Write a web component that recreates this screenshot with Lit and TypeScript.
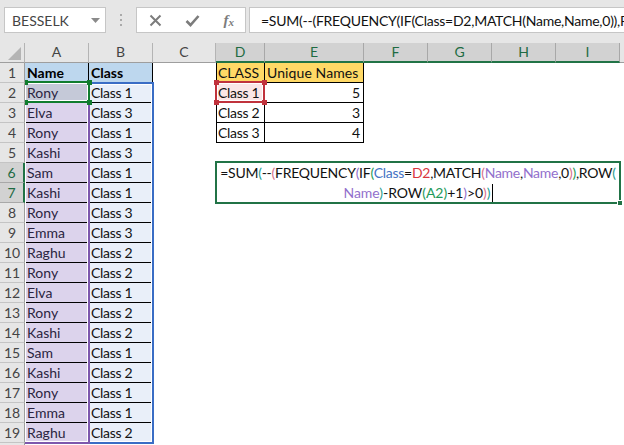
import { LitElement, css, html } from "lit";
import { customElement } from "lit/decorators.js";
import { classMap } from "lit/directives/class-map.js";

const COLUMNS = ["A", "B", "C", "D", "E", "F", "G", "H", "I"];
const SELECTED_COLS = ["D", "E", "F", "G", "H", "I"];
const SELECTED_ROWS = [6, 7];

const NAMES = ["Rony", "Elva", "Rony", "Kashi", "Sam", "Kashi", "Rony", "Emma", "Raghu", "Rony", "Elva", "Rony", "Kashi", "Sam", "Kashi", "Rony", "Emma", "Raghu"];
const CLASSES = [1, 3, 1, 3, 1, 1, 3, 3, 2, 2, 1, 2, 2, 1, 2, 1, 1, 2];

const SUMMARY: Record<number, [string, string]> = {
  1: ["CLASS", "Unique Names"],
  2: ["Class 1", "5"],
  3: ["Class 2", "3"],
  4: ["Class 3", "4"],
};

@customElement("app-root")
export class AppRoot extends LitElement {
  renderRow(row: number) {
    const selected = SELECTED_ROWS.includes(row);
    const summary = SUMMARY[row];
    const head = row === 1;
    return html`
      <div class=${classMap({ rowhead: true, sel: selected })}>${row}</div>
      <div class=${classMap({ cell: true, a: true, head, active: row === 2 })}>
        ${head ? html`<b>Name</b>` : NAMES[row - 2]}
      </div>
      <div class=${classMap({ cell: true, b: true, head })}>
        ${head ? html`<b>Class</b>` : `Class ${CLASSES[row - 2]}`}
      </div>
      <div class="cell blank"></div>
      ${summary
        ? html`
            <div class=${classMap({ cell: true, d: true, gold: head, picked: row === 2 })}>${summary[0]}</div>
            <div class=${classMap({ cell: true, e: true, gold: head, num: !head })}>${summary[1]}</div>
          `
        : html`<div class="cell blank"></div><div class="cell blank"></div>`}
      <div class="cell blank fill"></div>
    `;
  }

  render() {
    const rows = Array.from({ length: 19 }, (_, i) => i + 1);
    return html`
      <div class="toolbar">
        <div class="namebox">
          <span>BESSELK</span>
          <svg width="9" height="5" viewBox="0 0 9 5"><path d="M0 0h9L4.5 5z" fill="#8a8a8a"></path></svg>
        </div>
        <div class="dots"><i></i><i></i><i></i></div>
        <div class="fxgroup">
          <svg width="13" height="13" viewBox="0 0 13 13">
            <path d="M1.5 1.5l10 10M11.5 1.5l-10 10" stroke="#7c7c7c" stroke-width="2" fill="none"></path>
          </svg>
          <svg width="15" height="13" viewBox="0 0 15 13">
            <path d="M1.5 7l4 4 8-9" stroke="#7c7c7c" stroke-width="2.6" fill="none"></path>
          </svg>
          <span class="fx">f<sub>x</sub></span>
        </div>
        <div class="formula">=SUM(--(FREQUENCY(IF(Class=D2,MATCH(Name,Name,0)),ROW(Name)-ROW(A2)+1)&gt;0))</div>
      </div>

      <div class="sheet">
        <div class="grid">
          <div class="corner">
            <svg width="13" height="13" viewBox="0 0 13 13"><path d="M13 0v13H0z" fill="#b4b4b4"></path></svg>
          </div>
          ${COLUMNS.map(
            (c) => html`<div class=${classMap({ colhead: true, sel: SELECTED_COLS.includes(c) })}>${c}</div>`
          )}
          <div class="colhead rest"></div>
          ${rows.map((r) => this.renderRow(r))}
          <div class="rowhead"></div>
        </div>

        <div class="grid layer">
          <div class="range range-b"></div>
          <div class="range range-a"></div>
          <div class="range-active">
            <i class="h tl"></i><i class="h tr"></i><i class="h bl"></i><i class="h br"></i>
          </div>
          <div class="range-red">
            <i class="r tl"></i><i class="r tr"></i><i class="r bl"></i><i class="r br"></i>
          </div>
          <div class="editor">
            <div class="line first">=SUM<span class="teal">(</span>--<span class="pink">(</span>FREQUENCY<span class="purple">(</span>IF<span class="green">(</span><span class="blue">Class</span>=<span class="red">D2</span>,MATCH<span class="pink">(</span><span class="purple">Name</span>,<span class="purple">Name</span>,0<span class="pink">)</span><span class="green">)</span>,ROW<span class="teal">(</span></div>
            <div class="line"><span class="purple">Name</span><span class="teal">)</span>-ROW<span class="green">(A2)</span>+1<span class="purple">)</span>&gt;0<span class="pink">)</span><span class="teal">)</span><i class="caret"></i></div>
            <i class="grip"></i>
          </div>
        </div>
      </div>
    `;
  }

  static styles = css`
    :host {
      display: block;
      width: 624px;
      height: 445px;
      overflow: hidden;
      background: #fff;
      font-family: Lato, "Liberation Sans", sans-serif;
      font-size: 14px;
      color: #111;
    }

    .toolbar {
      height: 43px;
      box-sizing: border-box;
      padding: 7px 0 10px 4px;
      background: #e6e6e6;
      display: flex;
      align-items: stretch;
    }

    .namebox,
    .fxgroup,
    .formula {
      box-sizing: border-box;
      background: #fff;
      border: 1px solid #c6c6c6;
      display: flex;
      align-items: center;
    }

    .namebox {
      width: 102px;
      padding: 0 5px 0 7px;
      justify-content: space-between;
      color: #444;
    }

    .dots {
      width: 30px;
      display: flex;
      flex-direction: column;
      align-items: center;
      justify-content: center;
      gap: 3px;
    }

    .dots i {
      width: 2px;
      height: 2px;
      background: #aaa;
    }

    .fxgroup {
      width: 110px;
      padding: 0 11px 0 12px;
      justify-content: space-between;
    }

    .fx {
      font-family: "Liberation Serif", serif;
      font-style: italic;
      font-weight: bold;
      font-size: 15px;
      color: #7c7c7c;
    }

    .fx sub {
      font-size: 11px;
      vertical-align: -1px;
    }

    .formula {
      flex: 1;
      min-width: 0;
      margin-left: 3px;
      padding-left: 11px;
      border-right: none;
      white-space: nowrap;
      overflow: hidden;
      letter-spacing: -0.25px;
    }

    .sheet {
      display: grid;
    }

    .grid {
      grid-area: 1 / 1;
      display: grid;
      grid-template-columns: 25px 64px 64px 63px 49px 99px 64px 64px 64px 64px 4px;
      grid-template-rows: repeat(21, 20px);
    }

    .layer {
      pointer-events: none;
    }

    .corner {
      box-sizing: border-box;
      background: #e6e6e6;
      border-bottom: 1px solid #9e9e9e;
      border-right: 1px solid #b4b4b4;
      padding: 4px 0 0 8px;
    }

    .corner svg {
      display: block;
    }

    .colhead {
      box-sizing: border-box;
      background: #e6e6e6;
      border-right: 1px solid #b4b4b4;
      border-bottom: 1px solid #9e9e9e;
      color: #444;
      text-align: center;
      line-height: 18px;
    }

    .colhead.sel {
      background: #d2d2d2;
      border-right-color: #a8a8a8;
      border-bottom: 2px solid #217346;
      color: #1e6b42;
    }

    .colhead.rest {
      border-right: none;
      border-bottom: 1px solid #9e9e9e;
    }

    .rowhead {
      box-sizing: border-box;
      background: #e6e6e6;
      border-right: 1px solid #9e9e9e;
      border-bottom: 1px solid #c4c4c4;
      color: #444;
      text-align: center;
      line-height: 19px;
    }

    .rowhead.sel {
      background: #d2d2d2;
      border-right: 2px solid #217346;
      border-bottom-color: #a8a8a8;
      color: #1e6b42;
    }

    .cell {
      box-sizing: border-box;
      padding-left: 2px;
      line-height: 19px;
      white-space: nowrap;
      overflow: hidden;
    }

    .a,
    .b,
    .d,
    .e {
      border-right: 1px solid #000;
      border-bottom: 1px solid #000;
    }

    .a {
      background: #dcd3ec;
      color: #2a2440;
    }

    .b {
      background: #e9eff9;
      letter-spacing: -0.3px;
    }

    .a.head,
    .b.head {
      background: #bdd7ee;
      color: #000;
      letter-spacing: 0;
    }

    .a.active {
      background: #c5c9d8;
    }

    .d {
      border-left: 1px solid #000;
      padding-left: 1px;
      letter-spacing: -0.3px;
    }

    .d.gold {
      letter-spacing: 0;
    }

    .e.gold {
      letter-spacing: 0.1px;
    }

    .gold {
      background: #ffd966;
    }

    .picked {
      background: #fae6e6;
    }

    .num {
      text-align: right;
      padding-right: 3px;
    }

    .fill {
      grid-column: 7 / 12;
    }

    .range {
      grid-row: 3 / 21;
      margin-right: -1px;
      margin-bottom: -1px;
      box-shadow: inset 0 0 0 1px #fff;
    }

    .range-a {
      grid-column: 2 / 3;
      border-right: 2px solid #7d57ad;
      border-bottom: 2px solid #7d57ad;
    }

    .range-b {
      grid-column: 3 / 4;
      margin-top: -1px;
      border-top: 2px solid #3a6dc5;
      border-right: 2px solid #3a6dc5;
      border-bottom: 2px solid #3a6dc5;
    }

    .range-active {
      grid-column: 2 / 3;
      grid-row: 3 / 4;
      position: relative;
      margin: -2px -1px 0 0;
      border: solid #107c2e;
      border-width: 2px 2px 2px 0;
      box-shadow: inset 0 0 0 1px #fff;
    }

    .h,
    .r {
      position: absolute;
      width: 5px;
      height: 5px;
    }

    .h {
      background: #107c2e;
    }

    .r {
      background: #c0323c;
    }

    .tl,
    .tr {
      top: -3px;
    }

    .bl,
    .br {
      bottom: -4px;
    }

    .tl,
    .bl {
      left: -3px;
    }

    .h.tl,
    .h.bl {
      left: 0;
      width: 3px;
    }

    .tr,
    .br {
      right: -4px;
    }

    .range-red {
      grid-column: 5 / 6;
      grid-row: 3 / 4;
      position: relative;
      margin: -2px 0 0 -1px;
      border: 2px solid #c0323c;
      box-shadow: inset 0 0 0 1px #fff;
    }

    .editor {
      grid-column: 5 / 11;
      grid-row: 7 / 9;
      position: relative;
      margin: -2px -1px -1px -1px;
      padding: 0 3px;
      border: 2px solid #217346;
      background: #fff;
      color: #111;
      line-height: 20px;
      overflow: visible;
    }

    .line {
      height: 20px;
      white-space: nowrap;
      text-align: center;
      letter-spacing: -0.05px;
    }

    .line.first {
      letter-spacing: -0.26px;
    }

    .caret {
      display: inline-block;
      width: 1px;
      height: 18px;
      margin-left: 1px;
      background: #000;
      vertical-align: -4px;
    }

    .grip {
      position: absolute;
      right: -3px;
      bottom: -3px;
      width: 4px;
      height: 4px;
      background: #217346;
      border-left: 1px solid #fff;
      border-top: 1px solid #fff;
    }

    .teal {
      color: #1f9e8f;
    }

    .pink {
      color: #d8708c;
    }

    .purple {
      color: #9270cc;
    }

    .green {
      color: #1e9a5a;
    }

    .blue {
      color: #4472c4;
    }

    .red {
      color: #d9363e;
    }
  `;
}

declare global {
  interface HTMLElementTagNameMap {
    "app-root": AppRoot;
  }
}
